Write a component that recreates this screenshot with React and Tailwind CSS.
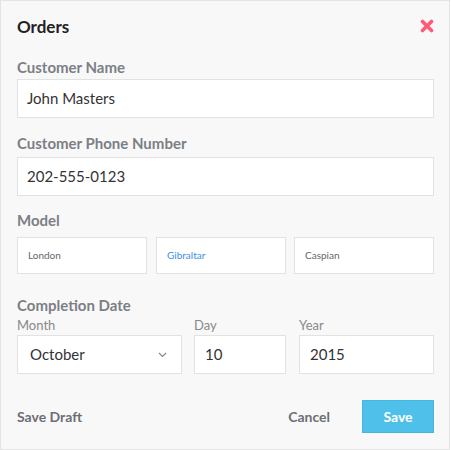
const inputBox = "h-[39px] bg-white border border-[#e2e2e2] flex items-center text-[15px] text-[#333]";
const modelBox = "h-[37px] bg-white border border-[#e2e2e2] flex items-center px-[10px] text-[10px]";

const Label = ({ children, className = "" }) => (
  <div className={`text-[15px] font-bold leading-5 text-[#7b7f86] ${className}`}>{children}</div>
);

export default function App() {
  return (
    <div className="w-[450px] h-[450px] bg-[#f8f8f8] border border-[#e4e4e4] pl-4 pr-[15px] pt-4 flex flex-col" style={{ fontFamily: "Lato, 'Open Sans', sans-serif" }}>
      {/* HEADER */}
      <div className="flex items-center justify-between h-5">
        <h1 className="text-[17px] font-bold text-[#222]">Orders</h1>
        <svg width="14" height="14" viewBox="0 0 14 14" className="-mt-[2px]">
          <path d="M2.5 2.5 L11.5 11.5 M11.5 2.5 L2.5 11.5" stroke="#ff5b79" strokeWidth="3.6" strokeLinecap="round" />
        </svg>
      </div>

      {/* CUSTOMER NAME */}
      <Label className="mt-[20px]">Customer Name</Label>
      <div className={`${inputBox} mt-[2px] px-[9px]`}>John Masters</div>

      {/* PHONE */}
      <Label className="mt-[15px]">Customer Phone Number</Label>
      <div className={`${inputBox} mt-[4px] px-[9px]`}>202-555-0123</div>

      {/* MODEL */}
      <Label className="mt-[14px]">Model</Label>
      <div className="flex mt-[7px]">
        <div className={`${modelBox} w-[130px] text-[#666]`}>London</div>
        <div className={`${modelBox} w-[130px] ml-[9px] text-[#3d8fe0]`}>Gibraltar</div>
        <div className={`${modelBox} flex-1 ml-[8px] text-[#666]`}>Caspian</div>
      </div>

      {/* COMPLETION DATE */}
      <Label className="mt-[21px]">Completion Date</Label>
      <div className="flex mt-[2px]">
        <div className="w-[165px] flex flex-col">
          <span className="text-[13px] leading-4 text-[#888]">Month</span>
          <div className={`${inputBox} mt-[2px] pl-[12px] pr-[14px] justify-between`}>
            <span>October</span>
            <svg width="9" height="6" viewBox="0 0 9 6">
              <path d="M1 1 L4.5 4.5 L8 1" fill="none" stroke="#888" strokeWidth="1.2" />
            </svg>
          </div>
        </div>
        <div className="w-[92px] ml-[12px] flex flex-col">
          <span className="text-[13px] leading-4 text-[#888]">Day</span>
          <div className={`${inputBox} mt-[2px] px-[10px]`}>10</div>
        </div>
        <div className="flex-1 ml-[13px] flex flex-col">
          <span className="text-[13px] leading-4 text-[#888]">Year</span>
          <div className={`${inputBox} mt-[2px] px-[10px]`}>2015</div>
        </div>
      </div>

      {/* FOOTER */}
      <div className="flex items-center mt-[26px]">
        <span className="text-[14px] font-bold text-[#6b6f75]">Save Draft</span>
        <span className="ml-auto text-[14px] font-bold text-[#6b6f75]">Cancel</span>
        <button className="ml-[32px] w-[72px] h-[33px] bg-[#4ec0e9] text-white text-[14px] font-bold border border-[#45b6df]">Save</button>
      </div>
    </div>
  );
}
